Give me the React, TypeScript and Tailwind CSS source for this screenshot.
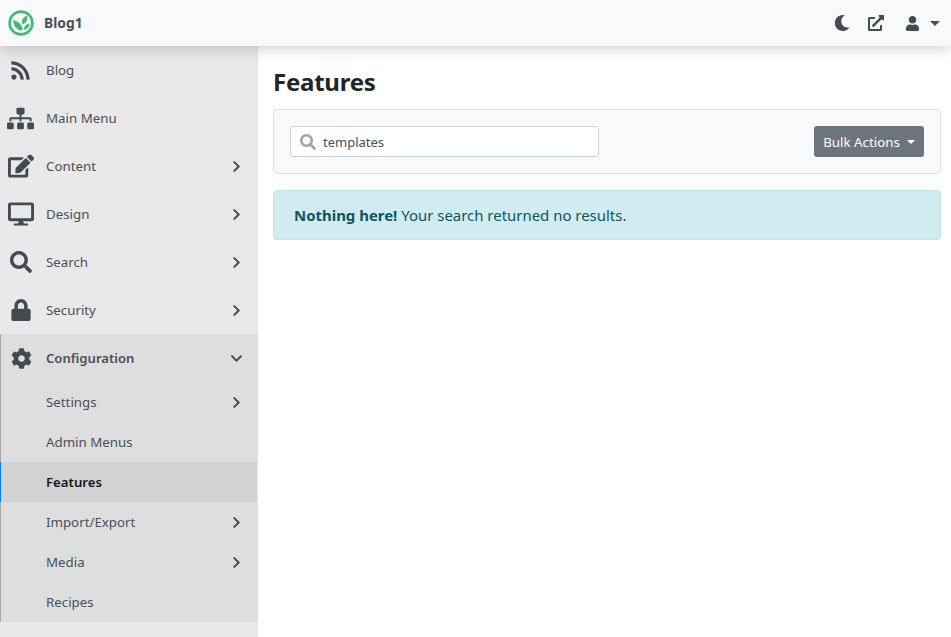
import React from "react";
import { FaRss, FaSitemap, FaEdit, FaDesktop, FaSearch, FaLock, FaCog, FaChevronRight, FaChevronDown, FaMoon, FaExternalLinkAlt, FaUser } from "react-icons/fa";

function Item({ icon, label, chevron }: { icon: React.ReactNode; label: string; chevron?: boolean }) {
  return (
    <div className="flex h-12 items-center text-[#495057]">
      <div className="flex w-[41px] shrink-0 justify-center text-[#454a50]">{icon}</div>
      <span className="ml-[5px] pt-[2px] text-[13.3px] leading-none">{label}</span>
      {chevron && <FaChevronRight className="ml-auto mr-[14px] text-[13px] text-[#495057]" />}
    </div>
  );
}

function Sub({ label, chevron, active }: { label: string; chevron?: boolean; active?: boolean }) {
  return (
    <div className={active
      ? "-ml-px flex h-10 items-center border-l border-[#007bff] bg-[#d2d2d2] pl-[45px] text-[13.2px] font-semibold text-[#16181b]"
      : "flex h-10 items-center pl-[45px] text-[13.3px] text-[#495057]"}>
      <span className="pt-[2px] leading-none">{label}</span>
      {chevron && <FaChevronRight className="ml-auto mr-[14px] text-[13px] text-[#495057]" />}
    </div>
  );
}

export default function App() {
  return (
    <div className="flex h-[637px] w-[951px] flex-col overflow-hidden bg-white font-['Noto_Sans',sans-serif]">
      <header className="relative z-10 flex h-[46px] shrink-0 items-center bg-[#f8f9fa] pl-2 pr-[11px] shadow-[0_2px_16px_rgba(0,0,0,0.2)]">
        <svg width="26" height="26" viewBox="0 0 26 26" aria-hidden="true">
          <circle cx="13" cy="13" r="11.4" fill="none" stroke="#43b878" strokeWidth="2.6" />
          <path d="M13.6 20.6C9.2 20.2 5.4 16.6 5.2 10.2C10 10.8 13.2 13.8 14.6 18.2C14.6 19.2 14.2 20 13.6 20.6Z" fill="#43b878" />
          <path d="M14.6 14.4C12.8 11.4 14.4 7.2 19.2 5.6C20 9.4 18.4 13 14.6 14.4Z" fill="#43b878" />
          <path d="M15.6 20C15.8 16.6 18 14 21.6 13.2C21.4 17 19 19.6 15.6 20Z" fill="#43b878" />
        </svg>
        <span className="ml-[10px] text-[13.8px] font-bold text-[#495057]">Blog1</span>
        <div className="ml-auto flex items-center text-[#454a50]">
          <FaMoon className="text-[16px]" />
          <FaExternalLinkAlt className="ml-[18px] text-[16px]" />
          <FaUser className="ml-[21px] text-[15px]" />
          <span className="ml-[10px] mt-px h-0 w-0 border-x-[5px] border-t-[5px] border-x-transparent border-t-[#454a50]" />
        </div>
      </header>
      <div className="flex min-h-0 flex-1">
        <aside className="w-[258px] shrink-0 border-r border-[#e2e2e2] bg-[#e9e9e9]">
          <Item icon={<FaRss className="text-[21px]" />} label="Blog" />
          <Item icon={<FaSitemap className="text-[27px]" />} label="Main Menu" />
          <Item icon={<FaEdit className="text-[26px]" />} label="Content" chevron />
          <Item icon={<FaDesktop className="text-[26px]" />} label="Design" chevron />
          <Item icon={<FaSearch className="text-[22px]" />} label="Search" chevron />
          <Item icon={<FaLock className="text-[22px]" />} label="Security" chevron />
          <div className="border-l border-[#a9a9a9] bg-[#dedede]">
            <div className="flex h-12 items-center text-[#495057]">
              <div className="flex w-[40px] shrink-0 justify-center text-[#454a50]"><FaCog className="text-[21px]" /></div>
              <span className="ml-[5px] pt-[2px] text-[13.1px] font-semibold leading-none">Configuration</span>
              <FaChevronDown className="ml-auto mr-[14px] text-[13px]" />
            </div>
            <Sub label="Settings" chevron />
            <Sub label="Admin Menus" />
            <Sub label="Features" active />
            <Sub label="Import/Export" chevron />
            <Sub label="Media" chevron />
            <Sub label="Recipes" />
          </div>
        </aside>
        <main className="min-w-0 flex-1 pl-[15px] pr-[10px] pt-[18px]">
          <h1 className="text-[24px] font-bold leading-[36px] tracking-[-0.25px] text-[#212529]">Features</h1>
          <div className="mt-[9px] flex h-[65px] items-center justify-between rounded-[4px] border border-[#dfdfdf] bg-[#f8f9fa] px-4">
            <div className="flex h-[31px] w-[309px] items-center rounded-[3px] border border-[#ced4da] bg-white pl-[9px]">
              <FaSearch className="text-[16px] text-[#a3a3a3]" />
              <span className="ml-[7px] pt-[2px] text-[13px] text-[#495057]">templates</span>
            </div>
            <div className="flex h-[31px] w-[110px] items-center justify-center rounded-[3px] bg-[#6c757d] text-[13.3px] text-white">
              <span className="pt-[2px]">Bulk Actions</span>
              <span className="ml-[7px] h-0 w-0 border-x-[4px] border-t-[4px] border-x-transparent border-t-white" />
            </div>
          </div>
          <div className="mt-4 flex h-[50px] items-center rounded-[4px] border border-[#bee5eb] bg-[#d1ecf1] px-5 text-[14.95px] text-[#0c5460]">
            <strong className="font-bold">Nothing here!</strong>&nbsp;Your search returned no results.
          </div>
        </main>
      </div>
    </div>
  );
}
